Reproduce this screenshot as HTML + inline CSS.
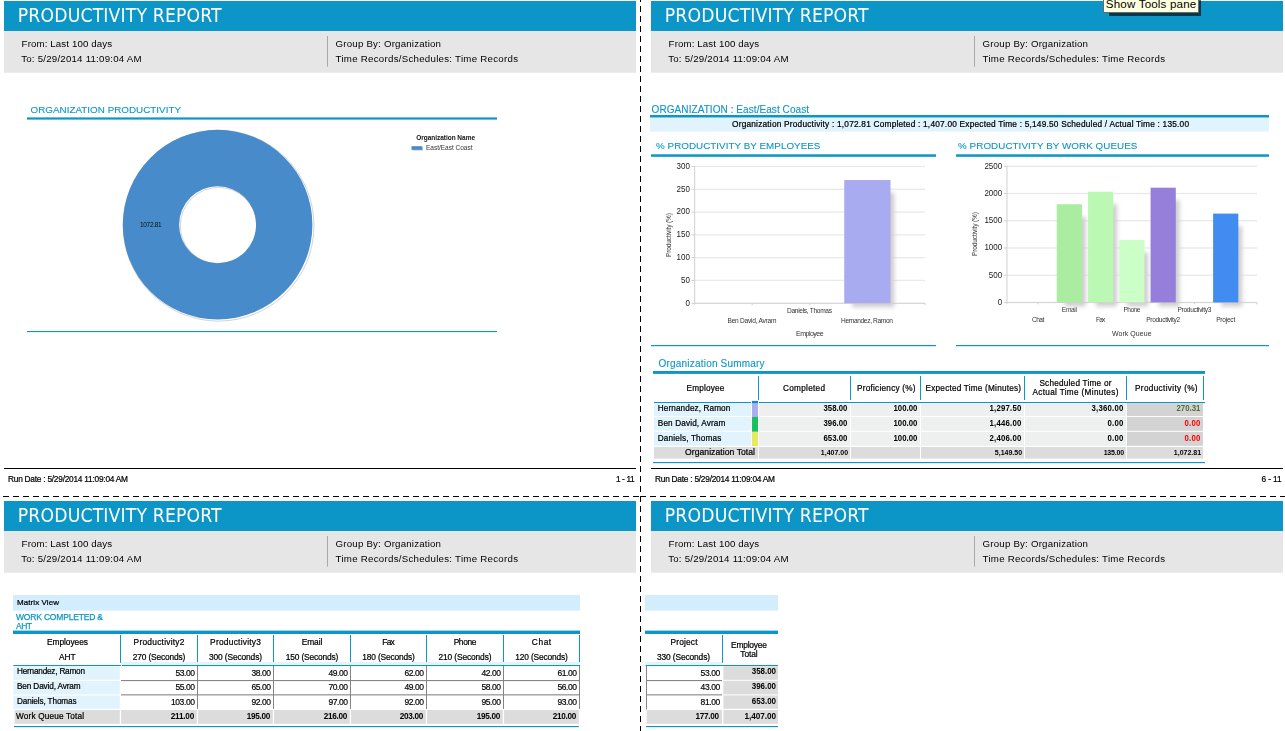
<!DOCTYPE html>
<html lang="en">
<head>
<meta charset="utf-8">
<title>Productivity Report</title>
<style>
html,body{margin:0;padding:0;background:#fff;}
body{width:1285px;height:731px;overflow:hidden;position:relative;font-family:'Liberation Sans',sans-serif;}
#viewer{position:absolute;left:0;top:0;width:1285px;height:731px;overflow:hidden;background:#fff;}
#viewer svg{position:absolute;left:0;top:0;display:block;will-change:transform;}
svg text{font-family:'Liberation Sans',sans-serif;white-space:pre;}
svg text.pix{stroke:#000;stroke-width:.22px;}
svg text.pixc{stroke:#0c96c8;stroke-width:.25px;}
svg text.pixb{}
svg text.pixt{stroke:#0c96c8;stroke-width:.12px;}
svg text.pixn{stroke:#000;stroke-width:.18px;}
#tip{position:absolute;left:1103px;top:-6px;width:94px;height:17.4px;box-sizing:content-box;background:#ffffe1;border:1px solid #6a6a6a;
 font:11.6px/14px 'Liberation Sans',sans-serif;color:#000;white-space:nowrap;overflow:hidden;}
#tip span{position:absolute;left:1.8px;top:2.1px;letter-spacing:.17px;}
#tipshadow{position:absolute;left:1108.5px;top:-4px;width:92.5px;height:19.9px;background:rgba(0,0,0,.62);filter:blur(.7px);}
</style>
</head>
<body>
<div id="viewer">
<svg width="1285" height="731" viewBox="0 0 1285 731">
<defs>
<filter id="b1" x="-5%" y="-5%" width="110%" height="110%"><feGaussianBlur stdDeviation="0.5"/></filter>
<filter id="b2" x="-40%" y="-20%" width="180%" height="140%"><feGaussianBlur stdDeviation="2"/></filter>
</defs>
<g id="page1">
<g transform="translate(0,0)">
<rect x="4" y="1" width="632" height="30" fill="#0c96c8"/>
<rect x="4" y="31" width="632" height="41.7" fill="#e6e6e6"/>
<text x="17.8" y="22" font-size="19.2" textLength="203.8" lengthAdjust="spacing" style="font-family:'DejaVu Sans Condensed','DejaVu Sans','Liberation Sans',sans-serif" fill="#fff">PRODUCTIVITY REPORT</text>
<text x="21.6" y="47.2" font-size="9.7" textLength="90.4" lengthAdjust="spacing">From: Last 100 days</text>
<text x="21.2" y="62.2" font-size="9.7" textLength="120.3" lengthAdjust="spacing">To: 5/29/2014 11:09:04 AM</text>
<rect x="327" y="36" width="1" height="30.6" fill="#a8a8a8"/>
<text x="335.6" y="47.2" font-size="9.7" textLength="105.4" lengthAdjust="spacing">Group By: Organization</text>
<text x="335.6" y="62.2" font-size="9.7" textLength="182.4" lengthAdjust="spacing">Time Records/Schedules: Time Records</text>
</g>
<text x="30.6" y="113" font-size="9.8" textLength="150.4" lengthAdjust="spacing" fill="#0c96c8" class="pixt">ORGANIZATION PRODUCTIVITY</text>
<rect x="27" y="117.4" width="470" height="2.2" fill="#0c96c8"/>
<circle cx="218.6" cy="225.7" r="95.4" fill="none" stroke="#c6c6c6" stroke-width=".8"/>
<circle cx="218.6" cy="225.7" r="38.3" fill="none" stroke="#c6c6c6" stroke-width=".8"/>
<path d="M122.8 224.7A94.8 94.8 0 1 1 312.4 224.7A94.8 94.8 0 1 1 122.8 224.7ZM179.1 224.7A38.5 38.5 0 1 0 256.1 224.7A38.5 38.5 0 1 0 179.1 224.7Z" fill="#478bca" fill-rule="evenodd"/>
<text x="140" y="227.4" font-size="6.5" textLength="21.6" lengthAdjust="spacing" fill="#111">1072.81</text>
<text x="416.2" y="139.7" font-size="6.5" textLength="58.8" lengthAdjust="spacing" font-weight="bold" fill="#111">Organization Name</text>
<rect x="412.3" y="147" width="10.7" height="3.6" fill="#c8c8c8" filter="url(#b1)"/>
<rect x="411.5" y="146.2" width="10.7" height="3.6" fill="#478bca"/>
<text x="426" y="150" font-size="6.5" textLength="46.5" lengthAdjust="spacing" fill="#333">East/East Coast</text>
<rect x="27" y="331" width="470" height="1.1" fill="#0c96c8"/>
<g transform="translate(0,0)">
<rect x="4" y="468" width="632" height="1" fill="#000"/>
<text x="8" y="482.1" font-size="8.3" textLength="120" lengthAdjust="spacing" class="pix">Run Date : 5/29/2014 11:09:04 AM</text>
<text x="634.6" y="482.1" font-size="8.3" text-anchor="end" textLength="18.6" lengthAdjust="spacing" class="pix">1 - 11</text>
</g>
</g>
<g id="page2">
<g transform="translate(647,0)">
<rect x="4" y="1" width="632" height="30" fill="#0c96c8"/>
<rect x="4" y="31" width="632" height="41.7" fill="#e6e6e6"/>
<text x="17.8" y="22" font-size="19.2" textLength="203.8" lengthAdjust="spacing" style="font-family:'DejaVu Sans Condensed','DejaVu Sans','Liberation Sans',sans-serif" fill="#fff">PRODUCTIVITY REPORT</text>
<text x="21.6" y="47.2" font-size="9.7" textLength="90.4" lengthAdjust="spacing">From: Last 100 days</text>
<text x="21.2" y="62.2" font-size="9.7" textLength="120.3" lengthAdjust="spacing">To: 5/29/2014 11:09:04 AM</text>
<rect x="327" y="36" width="1" height="30.6" fill="#a8a8a8"/>
<text x="335.6" y="47.2" font-size="9.7" textLength="105.4" lengthAdjust="spacing">Group By: Organization</text>
<text x="335.6" y="62.2" font-size="9.7" textLength="182.4" lengthAdjust="spacing">Time Records/Schedules: Time Records</text>
</g>
<text x="651.6" y="113" font-size="10" textLength="157.4" lengthAdjust="spacing" fill="#0c96c8" class="pixt">ORGANIZATION : East/East Coast</text>
<rect x="650" y="115" width="619" height="2.7" fill="#0c96c8"/>
<rect x="650" y="117.7" width="619" height="13.9" fill="#e1f3fc"/>
<text x="960.5" y="127" font-size="8.3" text-anchor="middle" textLength="457" lengthAdjust="spacing" class="pix">Organization Productivity : 1,072.81 Completed : 1,407.00 Expected Time : 5,149.50 Scheduled / Actual Time : 135.00</text>
<text x="656" y="149" font-size="9.8" textLength="164.4" lengthAdjust="spacing" fill="#0c96c8" class="pixt">% PRODUCTIVITY BY EMPLOYEES</text>
<rect x="651" y="154.3" width="285" height="2.5" fill="#0c96c8"/>
<text x="958" y="148.8" font-size="9.8" textLength="179.4" lengthAdjust="spacing" fill="#0c96c8" class="pixt">% PRODUCTIVITY BY WORK QUEUES</text>
<rect x="956" y="154.3" width="313" height="2.5" fill="#0c96c8"/>
<rect x="691.5" y="302.7" width="233.5" height="1.2" fill="#d4d4d4"/>
<text transform="translate(689.9,305.6) scale(1,1.16)" font-size="8" fill="#1a1a1a" text-anchor="end">0</text>
<rect x="694.5" y="279.77" width="230.5" height="1.3" fill="#e9e9e9"/>
<rect x="691.5" y="279.92" width="3" height="1" fill="#cdcdcd"/>
<text transform="translate(689.9,282.82) scale(1,1.16)" font-size="8" fill="#1a1a1a" text-anchor="end">50</text>
<rect x="694.5" y="256.98" width="230.5" height="1.3" fill="#e9e9e9"/>
<rect x="691.5" y="257.13" width="3" height="1" fill="#cdcdcd"/>
<text transform="translate(689.9,260.03) scale(1,1.16)" font-size="8" fill="#1a1a1a" text-anchor="end">100</text>
<rect x="694.5" y="234.2" width="230.5" height="1.3" fill="#e9e9e9"/>
<rect x="691.5" y="234.35" width="3" height="1" fill="#cdcdcd"/>
<text transform="translate(689.9,237.25) scale(1,1.16)" font-size="8" fill="#1a1a1a" text-anchor="end">150</text>
<rect x="694.5" y="211.42" width="230.5" height="1.3" fill="#e9e9e9"/>
<rect x="691.5" y="211.57" width="3" height="1" fill="#cdcdcd"/>
<text transform="translate(689.9,214.47) scale(1,1.16)" font-size="8" fill="#1a1a1a" text-anchor="end">200</text>
<rect x="694.5" y="188.63" width="230.5" height="1.3" fill="#e9e9e9"/>
<rect x="691.5" y="188.78" width="3" height="1" fill="#cdcdcd"/>
<text transform="translate(689.9,191.68) scale(1,1.16)" font-size="8" fill="#1a1a1a" text-anchor="end">250</text>
<rect x="694.5" y="165.85" width="230.5" height="1.3" fill="#e9e9e9"/>
<rect x="691.5" y="166" width="3" height="1" fill="#cdcdcd"/>
<text transform="translate(689.9,168.9) scale(1,1.16)" font-size="8" fill="#1a1a1a" text-anchor="end">300</text>
<rect x="694.1" y="166" width="1.1" height="138.6" fill="#d4d4d4"/>
<rect x="751.62" y="303.2" width="1" height="2" fill="#cfcfcf"/>
<rect x="809.25" y="303.2" width="1" height="2" fill="#cfcfcf"/>
<rect x="866.88" y="303.2" width="1" height="2" fill="#cfcfcf"/>
<rect x="924.5" y="303.2" width="1" height="2" fill="#cfcfcf"/>
<text x="752" y="323" font-size="6.6" text-anchor="middle" textLength="49" lengthAdjust="spacing" fill="#333">Ben David, Avram</text>
<text x="809.5" y="313.2" font-size="6.6" text-anchor="middle" textLength="45" lengthAdjust="spacing" fill="#333">Daniels, Thomas</text>
<text x="867" y="323" font-size="6.6" text-anchor="middle" textLength="52" lengthAdjust="spacing" fill="#333">Hernandez, Ramon</text>
<text x="809.8" y="335.6" font-size="7" text-anchor="middle" textLength="27.6" lengthAdjust="spacing" fill="#333">Employee</text>
<text transform="translate(670.6,235) rotate(-90)" font-size="6.6" fill="#333" text-anchor="middle" textLength="44" lengthAdjust="spacing">Productivity (%)</text>
<rect x="1003.8" y="301.9" width="253.2" height="1.2" fill="#d4d4d4"/>
<text transform="translate(1002.2,304.8) scale(1,1.16)" font-size="8" fill="#1a1a1a" text-anchor="end">0</text>
<rect x="1006.8" y="274.53" width="250.2" height="1.3" fill="#e9e9e9"/>
<rect x="1003.8" y="274.68" width="3" height="1" fill="#cdcdcd"/>
<text transform="translate(1002.2,277.58) scale(1,1.16)" font-size="8" fill="#1a1a1a" text-anchor="end">500</text>
<rect x="1006.8" y="247.31" width="250.2" height="1.3" fill="#e9e9e9"/>
<rect x="1003.8" y="247.46" width="3" height="1" fill="#cdcdcd"/>
<text transform="translate(1002.2,250.36) scale(1,1.16)" font-size="8" fill="#1a1a1a" text-anchor="end">1000</text>
<rect x="1006.8" y="220.09" width="250.2" height="1.3" fill="#e9e9e9"/>
<rect x="1003.8" y="220.24" width="3" height="1" fill="#cdcdcd"/>
<text transform="translate(1002.2,223.14) scale(1,1.16)" font-size="8" fill="#1a1a1a" text-anchor="end">1500</text>
<rect x="1006.8" y="192.87" width="250.2" height="1.3" fill="#e9e9e9"/>
<rect x="1003.8" y="193.02" width="3" height="1" fill="#cdcdcd"/>
<text transform="translate(1002.2,195.92) scale(1,1.16)" font-size="8" fill="#1a1a1a" text-anchor="end">2000</text>
<rect x="1006.8" y="165.65" width="250.2" height="1.3" fill="#e9e9e9"/>
<rect x="1003.8" y="165.8" width="3" height="1" fill="#cdcdcd"/>
<text transform="translate(1002.2,168.7) scale(1,1.16)" font-size="8" fill="#1a1a1a" text-anchor="end">2500</text>
<rect x="1006.4" y="165.8" width="1.1" height="138" fill="#d4d4d4"/>
<rect x="1037.58" y="302.4" width="1" height="2" fill="#cfcfcf"/>
<rect x="1068.85" y="302.4" width="1" height="2" fill="#cfcfcf"/>
<rect x="1100.12" y="302.4" width="1" height="2" fill="#cfcfcf"/>
<rect x="1131.4" y="302.4" width="1" height="2" fill="#cfcfcf"/>
<rect x="1162.67" y="302.4" width="1" height="2" fill="#cfcfcf"/>
<rect x="1193.95" y="302.4" width="1" height="2" fill="#cfcfcf"/>
<rect x="1225.22" y="302.4" width="1" height="2" fill="#cfcfcf"/>
<rect x="1256.5" y="302.4" width="1" height="2" fill="#cfcfcf"/>
<text x="1038.08" y="322.2" font-size="6.6" text-anchor="middle" textLength="12.4" lengthAdjust="spacing" fill="#333">Chat</text>
<text x="1069.35" y="312.2" font-size="6.6" text-anchor="middle" textLength="15" lengthAdjust="spacing" fill="#333">Email</text>
<text x="1100.62" y="322.2" font-size="6.6" text-anchor="middle" textLength="9.4" lengthAdjust="spacing" fill="#333">Fax</text>
<text x="1131.9" y="312.2" font-size="6.6" text-anchor="middle" textLength="17" lengthAdjust="spacing" fill="#333">Phone</text>
<text x="1163.17" y="322.2" font-size="6.6" text-anchor="middle" textLength="34" lengthAdjust="spacing" fill="#333">Productivity2</text>
<text x="1194.45" y="312.2" font-size="6.6" text-anchor="middle" textLength="34" lengthAdjust="spacing" fill="#333">Productivity3</text>
<text x="1225.72" y="322.2" font-size="6.6" text-anchor="middle" textLength="19" lengthAdjust="spacing" fill="#333">Project</text>
<text x="1131.8" y="335.5" font-size="7" text-anchor="middle" textLength="39.6" lengthAdjust="spacing" fill="#333">Work Queue</text>
<text transform="translate(977.4,234) rotate(-90)" font-size="6.6" fill="#333" text-anchor="middle" textLength="44" lengthAdjust="spacing">Productivity (%)</text>
<rect x="852.23" y="192.53" width="42" height="114.67" fill="#cfcdcf" filter="url(#b2)"/>
<rect x="1064.75" y="216.74" width="20.9" height="89.66" fill="#cfcdcf" filter="url(#b2)"/>
<rect x="1096.03" y="204.17" width="20.9" height="102.23" fill="#cfcdcf" filter="url(#b2)"/>
<rect x="1127.3" y="252.57" width="20.9" height="53.83" fill="#cfcdcf" filter="url(#b2)"/>
<rect x="1158.58" y="200.19" width="20.9" height="106.21" fill="#cfcdcf" filter="url(#b2)"/>
<rect x="1221.12" y="226.11" width="20.9" height="80.29" fill="#cfcdcf" filter="url(#b2)"/>
<rect x="844.23" y="180.03" width="46.3" height="123.17" fill="#a9abf0"/>
<rect x="1056.75" y="204.24" width="25.2" height="98.16" fill="#aaeda0"/>
<rect x="1088.03" y="191.67" width="25.2" height="110.73" fill="#bbf8b4"/>
<rect x="1119.3" y="240.07" width="25.2" height="62.33" fill="#ccfec8"/>
<rect x="1150.58" y="187.69" width="25.2" height="114.71" fill="#967fdb"/>
<rect x="1213.12" y="213.61" width="25.2" height="88.79" fill="#418cf0"/>
<rect x="651" y="345" width="285" height="1.2" fill="#0c96c8"/>
<rect x="956" y="345" width="313" height="1.2" fill="#0c96c8"/>
<text x="658.6" y="367" font-size="10" textLength="106" lengthAdjust="spacing" fill="#0c96c8" class="pixt">Organization Summary</text>
<rect x="653" y="371" width="552" height="2.9" fill="#0c96c8"/>
<rect x="758" y="376" width="1" height="24" fill="#0c96c8"/>
<rect x="850" y="376" width="1" height="24" fill="#0c96c8"/>
<rect x="920" y="376" width="1" height="24" fill="#0c96c8"/>
<rect x="1024" y="376" width="1" height="24" fill="#0c96c8"/>
<rect x="1126" y="376" width="1" height="24" fill="#0c96c8"/>
<rect x="1203" y="376" width="1" height="24" fill="#0c96c8"/>
<text x="705.5" y="391" font-size="8.2" text-anchor="middle" textLength="37.8" lengthAdjust="spacing" class="pix">Employee</text>
<text x="804" y="391" font-size="8.2" text-anchor="middle" textLength="42" lengthAdjust="spacing" class="pix">Completed</text>
<text x="886.3" y="391" font-size="8.2" text-anchor="middle" textLength="58.6" lengthAdjust="spacing" class="pix">Proficiency (%)</text>
<text x="973.3" y="391" font-size="8.2" text-anchor="middle" textLength="95.4" lengthAdjust="spacing" class="pix">Expected Time (Minutes)</text>
<text x="1075.4" y="385.6" font-size="8.2" text-anchor="middle" textLength="72" lengthAdjust="spacing" class="pix">Scheduled Time or</text>
<text x="1075.4" y="394.6" font-size="8.2" text-anchor="middle" textLength="86" lengthAdjust="spacing" class="pix">Actual Time (Minutes)</text>
<text x="1166.3" y="391" font-size="8.2" text-anchor="middle" textLength="62.6" lengthAdjust="spacing" class="pix">Productivity (%)</text>
<rect x="654" y="402" width="97" height="1.15" fill="#0c96c8"/>
<rect x="759" y="402" width="446" height="1.15" fill="#0c96c8"/>
<rect x="654" y="403.15" width="97" height="12.85" fill="#e1f3fc"/>
<rect x="752" y="403.15" width="6" height="13.85" fill="#aaadf0"/>
<text x="657.8" y="411" font-size="8.2" textLength="72.5" lengthAdjust="spacing" class="pix">Hernandez, Ramon</text>
<rect x="759" y="403.15" width="91" height="12.85" fill="#eef0ef"/>
<text x="0" y="0" font-size="7.8" transform="translate(847.4,410.7) scale(1,1.13)" text-anchor="end" textLength="24" lengthAdjust="spacing" font-weight="bold" class="pixb">358.00</text>
<rect x="851" y="403.15" width="69" height="12.85" fill="#eef0ef"/>
<text x="0" y="0" font-size="7.8" transform="translate(917.4,410.7) scale(1,1.13)" text-anchor="end" textLength="24" lengthAdjust="spacing" font-weight="bold" class="pixb">100.00</text>
<rect x="921" y="403.15" width="103" height="12.85" fill="#eef0ef"/>
<text x="0" y="0" font-size="7.8" transform="translate(1021.4,410.7) scale(1,1.13)" text-anchor="end" textLength="32" lengthAdjust="spacing" font-weight="bold" class="pixb">1,297.50</text>
<rect x="1025" y="403.15" width="101" height="12.85" fill="#eef0ef"/>
<text x="0" y="0" font-size="7.8" transform="translate(1123.4,410.7) scale(1,1.13)" text-anchor="end" textLength="32" lengthAdjust="spacing" font-weight="bold" class="pixb">3,360.00</text>
<rect x="1127" y="403.15" width="76" height="12.85" fill="#d3d3d3"/>
<text x="0" y="0" font-size="7.8" transform="translate(1200.4,410.7) scale(1,1.13)" text-anchor="end" textLength="24" lengthAdjust="spacing" font-weight="bold" fill="#556b2f" class="pixb">270.31</text>
<rect x="654" y="417" width="97" height="13.8" fill="#e1f3fc"/>
<rect x="752" y="417" width="6" height="14.8" fill="#18c060"/>
<text x="657.8" y="425.8" font-size="8.2" textLength="67.5" lengthAdjust="spacing" class="pix">Ben David, Avram</text>
<rect x="759" y="417" width="91" height="13.8" fill="#eef0ef"/>
<text x="0" y="0" font-size="7.8" transform="translate(847.4,425.6) scale(1,1.13)" text-anchor="end" textLength="24" lengthAdjust="spacing" font-weight="bold" class="pixb">396.00</text>
<rect x="851" y="417" width="69" height="13.8" fill="#eef0ef"/>
<text x="0" y="0" font-size="7.8" transform="translate(917.4,425.6) scale(1,1.13)" text-anchor="end" textLength="24" lengthAdjust="spacing" font-weight="bold" class="pixb">100.00</text>
<rect x="921" y="417" width="103" height="13.8" fill="#eef0ef"/>
<text x="0" y="0" font-size="7.8" transform="translate(1021.4,425.6) scale(1,1.13)" text-anchor="end" textLength="32" lengthAdjust="spacing" font-weight="bold" class="pixb">1,446.00</text>
<rect x="1025" y="417" width="101" height="13.8" fill="#eef0ef"/>
<text x="0" y="0" font-size="7.8" transform="translate(1123.4,425.6) scale(1,1.13)" text-anchor="end" textLength="16" lengthAdjust="spacing" font-weight="bold" class="pixb">0.00</text>
<rect x="1127" y="417" width="76" height="13.8" fill="#d3d3d3"/>
<text x="0" y="0" font-size="7.8" transform="translate(1200.4,425.6) scale(1,1.13)" text-anchor="end" textLength="16" lengthAdjust="spacing" font-weight="bold" fill="#ff0000" class="pixb">0.00</text>
<rect x="654" y="431.8" width="97" height="14" fill="#e1f3fc"/>
<rect x="752" y="431.8" width="6" height="14.2" fill="#e6ea62"/>
<text x="657.8" y="440.8" font-size="8.2" textLength="63.5" lengthAdjust="spacing" class="pix">Daniels, Thomas</text>
<rect x="759" y="431.8" width="91" height="14" fill="#eef0ef"/>
<text x="0" y="0" font-size="7.8" transform="translate(847.4,441.2) scale(1,1.13)" text-anchor="end" textLength="24" lengthAdjust="spacing" font-weight="bold" class="pixb">653.00</text>
<rect x="851" y="431.8" width="69" height="14" fill="#eef0ef"/>
<text x="0" y="0" font-size="7.8" transform="translate(917.4,441.2) scale(1,1.13)" text-anchor="end" textLength="24" lengthAdjust="spacing" font-weight="bold" class="pixb">100.00</text>
<rect x="921" y="431.8" width="103" height="14" fill="#eef0ef"/>
<text x="0" y="0" font-size="7.8" transform="translate(1021.4,441.2) scale(1,1.13)" text-anchor="end" textLength="32" lengthAdjust="spacing" font-weight="bold" class="pixb">2,406.00</text>
<rect x="1025" y="431.8" width="101" height="14" fill="#eef0ef"/>
<text x="0" y="0" font-size="7.8" transform="translate(1123.4,441.2) scale(1,1.13)" text-anchor="end" textLength="16" lengthAdjust="spacing" font-weight="bold" class="pixb">0.00</text>
<rect x="1127" y="431.8" width="76" height="14" fill="#d3d3d3"/>
<text x="0" y="0" font-size="7.8" transform="translate(1200.4,441.2) scale(1,1.13)" text-anchor="end" textLength="16" lengthAdjust="spacing" font-weight="bold" fill="#ff0000" class="pixb">0.00</text>
<rect x="752" y="400.9" width="6" height="2.3" fill="#0a8cc3"/>
<rect x="654" y="447" width="104" height="11.6" fill="#dcdcdc"/>
<text x="755" y="455.4" font-size="8.6" text-anchor="end" textLength="70" lengthAdjust="spacing" class="pix">Organization Total</text>
<rect x="759" y="447" width="91" height="11.6" fill="#dcdcdc"/>
<text x="848.1" y="455.1" font-size="7" text-anchor="end" textLength="27.28" lengthAdjust="spacing" font-weight="bold" class="pixb">1,407.00</text>
<rect x="851" y="447" width="69" height="11.6" fill="#dcdcdc"/>
<rect x="921" y="447" width="103" height="11.6" fill="#dcdcdc"/>
<text x="1022.1" y="455.1" font-size="7" text-anchor="end" textLength="27.28" lengthAdjust="spacing" font-weight="bold" class="pixb">5,149.50</text>
<rect x="1025" y="447" width="101" height="11.6" fill="#dcdcdc"/>
<text x="1124.1" y="455.1" font-size="7" text-anchor="end" textLength="20.46" lengthAdjust="spacing" font-weight="bold" class="pixb">135.00</text>
<rect x="1127" y="447" width="76" height="11.6" fill="#dcdcdc"/>
<text x="1201.1" y="455.1" font-size="7" text-anchor="end" textLength="27.28" lengthAdjust="spacing" font-weight="bold" class="pixb">1,072.81</text>
<rect x="653" y="462" width="552" height="1.15" fill="#0c96c8"/>
<g transform="translate(647,0)">
<rect x="4" y="468" width="632" height="1" fill="#000"/>
<text x="8" y="482.1" font-size="8.3" textLength="120" lengthAdjust="spacing" class="pix">Run Date : 5/29/2014 11:09:04 AM</text>
<text x="634.6" y="482.1" font-size="8.3" text-anchor="end" textLength="20" lengthAdjust="spacing" class="pix">6 - 11</text>
</g>
</g>
<g id="page3">
<g transform="translate(0,500)">
<rect x="4" y="1" width="632" height="30" fill="#0c96c8"/>
<rect x="4" y="31" width="632" height="41.7" fill="#e6e6e6"/>
<text x="17.8" y="22" font-size="19.2" textLength="203.8" lengthAdjust="spacing" style="font-family:'DejaVu Sans Condensed','DejaVu Sans','Liberation Sans',sans-serif" fill="#fff">PRODUCTIVITY REPORT</text>
<text x="21.6" y="47.2" font-size="9.7" textLength="90.4" lengthAdjust="spacing">From: Last 100 days</text>
<text x="21.2" y="62.2" font-size="9.7" textLength="120.3" lengthAdjust="spacing">To: 5/29/2014 11:09:04 AM</text>
<rect x="327" y="36" width="1" height="30.6" fill="#a8a8a8"/>
<text x="335.6" y="47.2" font-size="9.7" textLength="105.4" lengthAdjust="spacing">Group By: Organization</text>
<text x="335.6" y="62.2" font-size="9.7" textLength="182.4" lengthAdjust="spacing">Time Records/Schedules: Time Records</text>
</g>
<rect x="13" y="595" width="567" height="15.6" fill="#d2edfc"/>
<text x="17" y="605" font-size="8" textLength="42" lengthAdjust="spacing" class="pix">Matrix View</text>
<text x="16" y="620" font-size="8.5" textLength="87" lengthAdjust="spacing" fill="#0c96c8" class="pixc">WORK COMPLETED &amp;</text>
<text x="16" y="628.7" font-size="8.5" textLength="16" lengthAdjust="spacing" fill="#0c96c8" class="pixc">AHT</text>
<rect x="13" y="630.6" width="567" height="3.4" fill="#0c96c8"/>
<rect x="120" y="635" width="1" height="27.9" fill="#0c96c8"/>
<rect x="197" y="635" width="1" height="27.9" fill="#0c96c8"/>
<rect x="273" y="635" width="1" height="27.9" fill="#0c96c8"/>
<rect x="350" y="635" width="1" height="27.9" fill="#0c96c8"/>
<rect x="426" y="635" width="1" height="27.9" fill="#0c96c8"/>
<rect x="503" y="635" width="1" height="27.9" fill="#0c96c8"/>
<rect x="579" y="635" width="1" height="27.9" fill="#0c96c8"/>
<text x="67.5" y="645" font-size="8.4" text-anchor="middle" textLength="41" lengthAdjust="spacing" class="pix">Employees</text>
<text x="67.3" y="659.6" font-size="8.4" text-anchor="middle" textLength="16.6" lengthAdjust="spacing" class="pix">AHT</text>
<text x="159" y="645" font-size="8.4" text-anchor="middle" textLength="50.8" lengthAdjust="spacing" class="pix">Productivity2</text>
<text x="159" y="659.6" font-size="8.4" text-anchor="middle" textLength="52.4" lengthAdjust="spacing" class="pix">270 (Seconds)</text>
<text x="235.5" y="645" font-size="8.4" text-anchor="middle" textLength="50.8" lengthAdjust="spacing" class="pix">Productivity3</text>
<text x="235.5" y="659.6" font-size="8.4" text-anchor="middle" textLength="53" lengthAdjust="spacing" class="pix">300 (Seconds)</text>
<text x="312" y="645" font-size="8.4" text-anchor="middle" textLength="20.6" lengthAdjust="spacing" class="pix">Email</text>
<text x="312" y="659.6" font-size="8.4" text-anchor="middle" textLength="52.6" lengthAdjust="spacing" class="pix">150 (Seconds)</text>
<text x="388.5" y="645" font-size="8.4" text-anchor="middle" textLength="12.4" lengthAdjust="spacing" class="pix">Fax</text>
<text x="388.5" y="659.6" font-size="8.4" text-anchor="middle" textLength="52.6" lengthAdjust="spacing" class="pix">180 (Seconds)</text>
<text x="465" y="645" font-size="8.4" text-anchor="middle" textLength="22.6" lengthAdjust="spacing" class="pix">Phone</text>
<text x="465" y="659.6" font-size="8.4" text-anchor="middle" textLength="53" lengthAdjust="spacing" class="pix">210 (Seconds)</text>
<text x="541.5" y="645" font-size="8.4" text-anchor="middle" textLength="19.4" lengthAdjust="spacing" class="pix">Chat</text>
<text x="541.5" y="659.6" font-size="8.4" text-anchor="middle" textLength="52.6" lengthAdjust="spacing" class="pix">120 (Seconds)</text>
<rect x="121.6" y="662" width="458.4" height="3" fill="#e4f4fc"/>
<rect x="13.4" y="665" width="107.4" height="1.05" fill="#0c96c8"/>
<rect x="122" y="665" width="458" height="1.05" fill="#0c96c8"/>
<rect x="13.4" y="666.4" width="106.4" height="13.4" fill="#e1f3fc"/>
<text x="17" y="673.6" font-size="8.2" textLength="68" lengthAdjust="spacing" class="pix">Hernandez, Ramon</text>
<text x="195" y="676" font-size="8.5" text-anchor="end" textLength="19.6" lengthAdjust="spacing" class="pixn">53.00</text>
<text x="271" y="676" font-size="8.5" text-anchor="end" textLength="19.6" lengthAdjust="spacing" class="pixn">38.00</text>
<text x="348" y="676" font-size="8.5" text-anchor="end" textLength="19.6" lengthAdjust="spacing" class="pixn">49.00</text>
<text x="424" y="676" font-size="8.5" text-anchor="end" textLength="19.6" lengthAdjust="spacing" class="pixn">62.00</text>
<text x="501" y="676" font-size="8.5" text-anchor="end" textLength="19.6" lengthAdjust="spacing" class="pixn">42.00</text>
<text x="577" y="676" font-size="8.5" text-anchor="end" textLength="19.6" lengthAdjust="spacing" class="pixn">61.00</text>
<rect x="13.4" y="681" width="106.4" height="13.4" fill="#e1f3fc"/>
<text x="17" y="689" font-size="8.2" textLength="63.6" lengthAdjust="spacing" class="pix">Ben David, Avram</text>
<text x="195" y="690" font-size="8.5" text-anchor="end" textLength="19.6" lengthAdjust="spacing" class="pixn">55.00</text>
<text x="271" y="690" font-size="8.5" text-anchor="end" textLength="19.6" lengthAdjust="spacing" class="pixn">65.00</text>
<text x="348" y="690" font-size="8.5" text-anchor="end" textLength="19.6" lengthAdjust="spacing" class="pixn">70.00</text>
<text x="424" y="690" font-size="8.5" text-anchor="end" textLength="19.6" lengthAdjust="spacing" class="pixn">49.00</text>
<text x="501" y="690" font-size="8.5" text-anchor="end" textLength="19.6" lengthAdjust="spacing" class="pixn">58.00</text>
<text x="577" y="690" font-size="8.5" text-anchor="end" textLength="19.6" lengthAdjust="spacing" class="pixn">56.00</text>
<rect x="13.4" y="695.6" width="106.4" height="13.2" fill="#e1f3fc"/>
<text x="17" y="703.6" font-size="8.2" textLength="59.6" lengthAdjust="spacing" class="pix">Daniels, Thomas</text>
<text x="195" y="704.5" font-size="8.5" text-anchor="end" textLength="24.05" lengthAdjust="spacing" class="pixn">103.00</text>
<text x="271" y="704.5" font-size="8.5" text-anchor="end" textLength="19.6" lengthAdjust="spacing" class="pixn">92.00</text>
<text x="348" y="704.5" font-size="8.5" text-anchor="end" textLength="19.6" lengthAdjust="spacing" class="pixn">97.00</text>
<text x="424" y="704.5" font-size="8.5" text-anchor="end" textLength="19.6" lengthAdjust="spacing" class="pixn">92.00</text>
<text x="501" y="704.5" font-size="8.5" text-anchor="end" textLength="19.6" lengthAdjust="spacing" class="pixn">95.00</text>
<text x="577" y="704.5" font-size="8.5" text-anchor="end" textLength="19.6" lengthAdjust="spacing" class="pixn">93.00</text>
<rect x="121" y="680" width="459" height="1.1" fill="#858585"/>
<rect x="121" y="694.3" width="459" height="1.1" fill="#858585"/>
<rect x="197" y="666" width="1" height="43" fill="#858585"/>
<rect x="273" y="666" width="1" height="43" fill="#858585"/>
<rect x="350" y="666" width="1" height="43" fill="#858585"/>
<rect x="426" y="666" width="1" height="43" fill="#858585"/>
<rect x="503" y="666" width="1" height="43" fill="#858585"/>
<rect x="579" y="666" width="1" height="43" fill="#858585"/>
<rect x="14.6" y="710" width="105.2" height="13.8" fill="#dcdcdc"/>
<text x="16" y="718.6" font-size="8.2" textLength="68" lengthAdjust="spacing" class="pix">Work Queue Total</text>
<rect x="121.1" y="710" width="75.7" height="13.8" fill="#dcdcdc"/>
<text x="194.2" y="718.9" font-size="8.2" text-anchor="end" textLength="23.4" lengthAdjust="spacing" font-weight="bold" class="pixb">211.00</text>
<rect x="198.1" y="710" width="74.7" height="13.8" fill="#dcdcdc"/>
<text x="270.2" y="718.9" font-size="8.2" text-anchor="end" textLength="23.4" lengthAdjust="spacing" font-weight="bold" class="pixb">195.00</text>
<rect x="274.1" y="710" width="75.7" height="13.8" fill="#dcdcdc"/>
<text x="347.2" y="718.9" font-size="8.2" text-anchor="end" textLength="23.4" lengthAdjust="spacing" font-weight="bold" class="pixb">216.00</text>
<rect x="351.1" y="710" width="74.7" height="13.8" fill="#dcdcdc"/>
<text x="423.2" y="718.9" font-size="8.2" text-anchor="end" textLength="23.4" lengthAdjust="spacing" font-weight="bold" class="pixb">203.00</text>
<rect x="427.1" y="710" width="75.7" height="13.8" fill="#dcdcdc"/>
<text x="500.2" y="718.9" font-size="8.2" text-anchor="end" textLength="23.4" lengthAdjust="spacing" font-weight="bold" class="pixb">195.00</text>
<rect x="504.1" y="710" width="74.7" height="13.8" fill="#dcdcdc"/>
<text x="576.2" y="718.9" font-size="8.2" text-anchor="end" textLength="23.4" lengthAdjust="spacing" font-weight="bold" class="pixb">210.00</text>
<rect x="14" y="726" width="564.8" height="1.15" fill="#0c96c8"/>
</g>
<g id="page4">
<g transform="translate(647,500)">
<rect x="4" y="1" width="632" height="30" fill="#0c96c8"/>
<rect x="4" y="31" width="632" height="41.7" fill="#e6e6e6"/>
<text x="17.8" y="22" font-size="19.2" textLength="203.8" lengthAdjust="spacing" style="font-family:'DejaVu Sans Condensed','DejaVu Sans','Liberation Sans',sans-serif" fill="#fff">PRODUCTIVITY REPORT</text>
<text x="21.6" y="47.2" font-size="9.7" textLength="90.4" lengthAdjust="spacing">From: Last 100 days</text>
<text x="21.2" y="62.2" font-size="9.7" textLength="120.3" lengthAdjust="spacing">To: 5/29/2014 11:09:04 AM</text>
<rect x="327" y="36" width="1" height="30.6" fill="#a8a8a8"/>
<text x="335.6" y="47.2" font-size="9.7" textLength="105.4" lengthAdjust="spacing">Group By: Organization</text>
<text x="335.6" y="62.2" font-size="9.7" textLength="182.4" lengthAdjust="spacing">Time Records/Schedules: Time Records</text>
</g>
<rect x="645" y="595" width="133" height="15.6" fill="#d2edfc"/>
<rect x="645" y="630.6" width="133" height="3.4" fill="#0c96c8"/>
<rect x="722" y="635" width="1" height="27.9" fill="#0c96c8"/>
<text x="684" y="645" font-size="8.4" text-anchor="middle" textLength="27" lengthAdjust="spacing" class="pix">Project</text>
<text x="683.5" y="659.6" font-size="8.4" text-anchor="middle" textLength="53" lengthAdjust="spacing" class="pix">330 (Seconds)</text>
<text x="749" y="648" font-size="8.4" text-anchor="middle" textLength="36" lengthAdjust="spacing" class="pix">Employee</text>
<text x="749" y="656.6" font-size="8.4" text-anchor="middle" textLength="17.4" lengthAdjust="spacing" class="pix">Total</text>
<rect x="645" y="662" width="77" height="3" fill="#e4f4fc"/>
<rect x="645.6" y="665" width="132.4" height="1.05" fill="#0c96c8"/>
<text x="720.2" y="676" font-size="8.5" text-anchor="end" textLength="19.6" lengthAdjust="spacing" class="pixn">53.00</text>
<rect x="723.4" y="666.2" width="54.6" height="13.6" fill="#dcdcdc"/>
<text x="0" y="0" font-size="8" transform="translate(776,673.9) scale(1,1.1)" text-anchor="end" textLength="24.3" lengthAdjust="spacing" font-weight="bold" class="pixb">358.00</text>
<text x="720.2" y="690" font-size="8.5" text-anchor="end" textLength="19.6" lengthAdjust="spacing" class="pixn">43.00</text>
<rect x="723.4" y="680.8" width="54.6" height="13.6" fill="#dcdcdc"/>
<text x="0" y="0" font-size="8" transform="translate(776,688.7) scale(1,1.1)" text-anchor="end" textLength="24.3" lengthAdjust="spacing" font-weight="bold" class="pixb">396.00</text>
<text x="720.2" y="704.5" font-size="8.5" text-anchor="end" textLength="19.6" lengthAdjust="spacing" class="pixn">81.00</text>
<rect x="723.4" y="695.4" width="54.6" height="13.4" fill="#dcdcdc"/>
<text x="0" y="0" font-size="8" transform="translate(776,703.5) scale(1,1.1)" text-anchor="end" textLength="24.3" lengthAdjust="spacing" font-weight="bold" class="pixb">653.00</text>
<rect x="646.4" y="680" width="75.6" height="1.1" fill="#858585"/>
<rect x="646.4" y="694.3" width="75.6" height="1.1" fill="#858585"/>
<rect x="646" y="666" width="1" height="43.4" fill="#858585"/>
<rect x="646.6" y="710" width="75.4" height="13.8" fill="#dcdcdc"/>
<text x="719" y="718.9" font-size="8.2" text-anchor="end" textLength="23.4" lengthAdjust="spacing" font-weight="bold" class="pixb">177.00</text>
<rect x="723.4" y="710" width="54.6" height="13.8" fill="#dcdcdc"/>
<text x="776" y="718.9" font-size="8.2" text-anchor="end" textLength="31.6" lengthAdjust="spacing" font-weight="bold" class="pixb">1,407.00</text>
<rect x="646" y="726" width="132" height="1.15" fill="#0c96c8"/>
</g>
<g id="pagebreaks" stroke="#000" stroke-width="1" stroke-dasharray="6 4" shape-rendering="crispEdges" fill="none">
<line x1="-7" y1="496.5" x2="640" y2="496.5"/>
<line x1="640" y1="496.5" x2="1290" y2="496.5"/>
<line x1="640.5" y1="-4" x2="640.5" y2="736"/>
</g>
</svg>
<div id="tipshadow"></div>
<div id="tip"><span>Show Tools pane</span></div>
</div>
</body>
</html>
